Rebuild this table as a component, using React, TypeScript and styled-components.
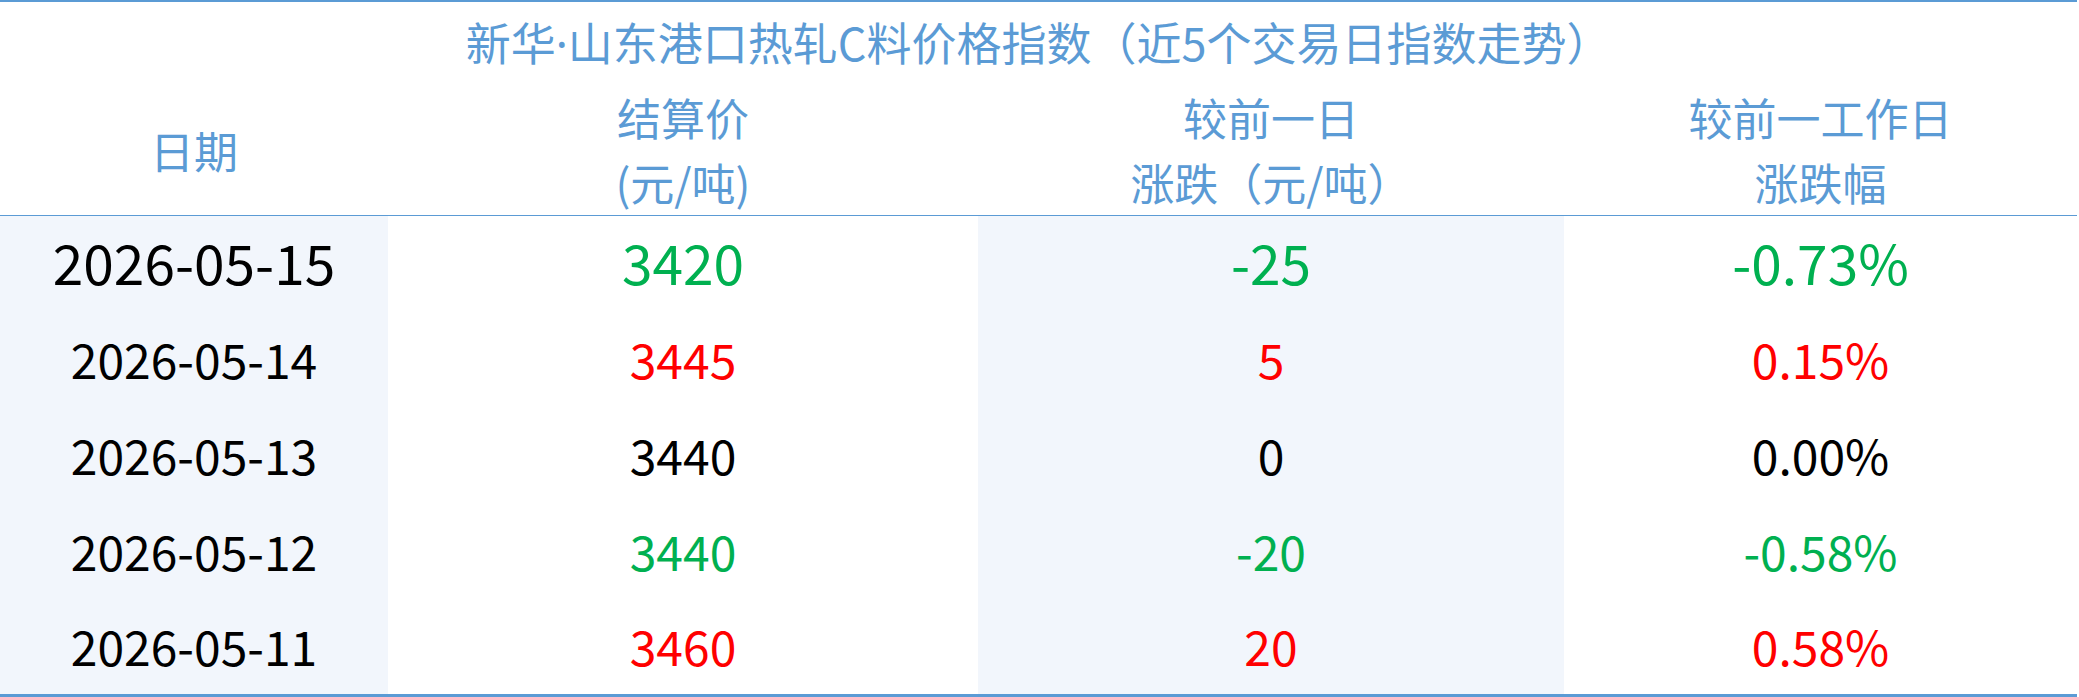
import styled, { createGlobalStyle } from "styled-components";

type Trend = "up" | "down" | "flat";

type Row = {
  date: string;
  price: string;
  change: string;
  pct: string;
  trend: Trend;
};

const rows: Row[] = [
  { date: "2026-05-15", price: "3420", change: "-25", pct: "-0.73%", trend: "down" },
  { date: "2026-05-14", price: "3445", change: "5", pct: "0.15%", trend: "up" },
  { date: "2026-05-13", price: "3440", change: "0", pct: "0.00%", trend: "flat" },
  { date: "2026-05-12", price: "3440", change: "-20", pct: "-0.58%", trend: "down" },
  { date: "2026-05-11", price: "3460", change: "20", pct: "0.58%", trend: "up" },
];

const trendColor: Record<Trend, string> = {
  up: "#ff0000",
  down: "#00b050",
  flat: "#000000",
};

export default function App() {
  return (
    <>
      <GlobalStyle />
      <Table>
        <colgroup>
          <col style={{ width: 388 }} />
          <col style={{ width: 590 }} />
          <col style={{ width: 586 }} />
          <col style={{ width: 513 }} />
        </colgroup>
        <thead>
          <tr>
            <Title colSpan={4}>
              新华<Dot>·</Dot>山东港口热轧C料价格指数（近5个交易日指数走势）
            </Title>
          </tr>
          <tr>
            <HeadCell>日期</HeadCell>
            <HeadCell>
              结算价
              <br />
              (元/吨)
            </HeadCell>
            <HeadCell>
              较前一日
              <br />
              涨跌（元/吨）
            </HeadCell>
            <HeadCell>
              较前一工作日
              <br />
              涨跌幅
            </HeadCell>
          </tr>
        </thead>
        <tbody>
          {rows.map((row, i) => (
            <BodyRow key={row.date}>
              <Cell $shaded $lead={i === 0}>
                {row.date}
              </Cell>
              <Cell $lead={i === 0} $color={trendColor[row.trend]}>
                {row.price}
              </Cell>
              <Cell $shaded $lead={i === 0} $color={trendColor[row.trend]}>
                {row.change}
              </Cell>
              <Cell $lead={i === 0} $color={trendColor[row.trend]}>
                {row.pct}
              </Cell>
            </BodyRow>
          ))}
        </tbody>
      </Table>
    </>
  );
}

const GlobalStyle = createGlobalStyle`
  body {
    margin: 0;
    background: #ffffff;
    font-family: "Noto Sans CJK SC", "Noto Sans", sans-serif;
  }
`;

const Table = styled.table`
  width: 2077px;
  border-collapse: collapse;
  table-layout: fixed;
  border-top: 2px solid #5b9bd5;
  border-bottom: 4px solid #5b9bd5;

  thead tr:last-child th {
    border-bottom: 1px solid #5b9bd5;
  }
`;

const Title = styled.th`
  height: 81px;
  padding: 0 0 2px;
  font-size: 45px;
  font-weight: normal;
  line-height: 79px;
  color: #5b9bd5;
  text-align: center;
`;

const Dot = styled.span`
  font-family: "Noto Sans", "Liberation Sans", sans-serif;
`;

const HeadCell = styled.th`
  height: 130px;
  padding: 0;
  font-size: 44px;
  font-weight: normal;
  line-height: 65px;
  color: #5b9bd5;
  text-align: center;
  vertical-align: middle;
`;

const BodyRow = styled.tr`
  height: 96px;
`;

const Cell = styled.td<{ $shaded?: boolean; $lead?: boolean; $color?: string }>`
  padding: 0 0 4px;
  text-align: center;
  vertical-align: middle;
  background: ${(p) => (p.$shaded ? "#f2f6fc" : "#ffffff")};
  color: ${(p) => p.$color ?? "#000000"};
  font-size: ${(p) => (p.$lead ? "55px" : "48px")};
  line-height: 1;
`;
